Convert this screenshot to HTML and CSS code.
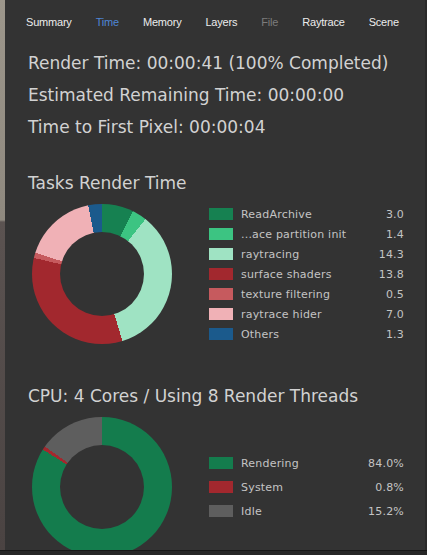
FILE: index.html
```html
<!DOCTYPE html>
<html>
<head>
<meta charset="utf-8">
<link rel="stylesheet" href="styles.css">
</head>
<body>
<div class="page">
  <div class="edge"></div>
  <div class="panel">
    <nav class="tabs">
      <span class="tab">Summary</span>
      <span class="tab active">Time</span>
      <span class="tab">Memory</span>
      <span class="tab">Layers</span>
      <span class="tab disabled">File</span>
      <span class="tab">Raytrace</span>
      <span class="tab">Scene</span>
    </nav>
    <div class="info">
      <div class="line">Render Time: 00:00:41 (100% Completed)</div>
      <div class="line">Estimated Remaining Time: 00:00:00</div>
      <div class="line">Time to First Pixel: 00:00:04</div>
    </div>
    <h2 class="title title-tasks">Tasks Render Time</h2>
    <div class="chart-row">
      <div class="donut donut-tasks"></div>
      <ul class="legend legend-tasks">
        <li><span class="sw c-read"></span><span class="lbl">ReadArchive</span><span class="val">3.0</span></li>
        <li><span class="sw c-ace"></span><span class="lbl">...ace partition init</span><span class="val">1.4</span></li>
        <li><span class="sw c-ray"></span><span class="lbl">raytracing</span><span class="val">14.3</span></li>
        <li><span class="sw c-surf"></span><span class="lbl">surface shaders</span><span class="val">13.8</span></li>
        <li><span class="sw c-tex"></span><span class="lbl">texture filtering</span><span class="val">0.5</span></li>
        <li><span class="sw c-hid"></span><span class="lbl">raytrace hider</span><span class="val">7.0</span></li>
        <li><span class="sw c-oth"></span><span class="lbl">Others</span><span class="val">1.3</span></li>
      </ul>
    </div>
    <h2 class="title title-cpu">CPU: 4 Cores / Using 8 Render Threads</h2>
    <div class="chart-row">
      <div class="donut donut-cpu"></div>
      <ul class="legend legend-cpu">
        <li><span class="sw c-rend"></span><span class="lbl">Rendering</span><span class="val">84.0%</span></li>
        <li><span class="sw c-sys"></span><span class="lbl">System</span><span class="val">0.8%</span></li>
        <li><span class="sw c-idle"></span><span class="lbl">Idle</span><span class="val">15.2%</span></li>
      </ul>
    </div>
  </div>
</div>
</body>
</html>
```
FILE: styles.css
```css
html, body {
  margin: 0;
  padding: 0;
  background: #262626;
}
body {
  width: 427px;
  height: 555px;
  overflow: hidden;
}
.page {
  display: flex;
  height: 550px;
  border-bottom: 1px solid #161616;
}
.edge {
  width: 5px;
  flex: none;
  background: linear-gradient(#9c968b 0, #8f897f 220px, #5b5351 222px, #4a4342 550px);
}
.panel {
  flex: 1;
  background: #333333;
  border-right: 2px solid #2a2a2a;
  overflow: hidden;
  font-family: "DejaVu Sans", sans-serif;
}
.tabs {
  display: flex;
  gap: 24px;
  height: 44px;
  align-items: center;
  padding-left: 21px;
  font-family: "Liberation Sans", Arial, sans-serif;
  font-size: 11px;
  letter-spacing: -0.2px;
  color: #ececec;
}
.tab.active { color: #4f86d6; }
.tab.disabled { color: #7c7c7c; }
.info {
  padding-left: 23px;
  margin-top: 3px;
  color: #d2d2d2;
  font-size: 17px;
}
.line {
  height: 32px;
  line-height: 32px;
}
.title {
  margin: 0;
  padding-left: 23px;
  font-weight: normal;
  font-size: 17px;
  color: #d2d2d2;
  line-height: 24px;
}
.title-tasks { margin-top: 28px; }
.title-cpu { margin-top: 40px; }
.chart-row {
  display: flex;
  align-items: center;
  margin-top: 9px;
  padding-left: 27px;
}
.donut {
  width: 140px;
  height: 140px;
  flex: none;
  border-radius: 50%;
  display: grid;
  place-items: center;
}
.donut::after {
  content: "";
  width: 84px;
  height: 84px;
  border-radius: 50%;
  background: #333333;
}
.donut-tasks {
  background: conic-gradient(
    #168151 0deg 26.15deg,
    #3cc482 26.15deg 38.35deg,
    #9fe3c3 38.35deg 163deg,
    #a2282e 163deg 283.3deg,
    #c65a5e 283.3deg 287.65deg,
    #f0b1b6 287.65deg 348.67deg,
    #1b5a8c 348.67deg 360deg);
}
.donut-cpu {
  background: conic-gradient(
    #147c4d 0deg 302.4deg,
    #a2282e 302.4deg 305.3deg,
    #5e5e5e 305.3deg 360deg);
}
.legend {
  list-style: none;
  margin: 0 0 0 37px;
  padding: 0;
  width: 195px;
  font-size: 11px;
  color: #c4c4c4;
}
.legend li {
  display: flex;
  align-items: center;
  height: 20px;
}
.legend-cpu li { height: 24px; }
.sw {
  width: 24px;
  height: 12px;
  flex: none;
  margin-right: 8px;
}
.lbl {
  flex: 1;
  letter-spacing: 0.2px;
}
.val {
  text-align: right;
  letter-spacing: 0.2px;
}
.c-read { background: #168151; }
.c-ace { background: #3cc482; }
.c-ray { background: #9fe3c3; }
.c-surf { background: #a2282e; }
.c-tex { background: #c65a5e; }
.c-hid { background: #f0b1b6; }
.c-oth { background: #1b5a8c; }
.c-rend { background: #147c4d; }
.c-sys { background: #a2282e; }
.c-idle { background: #5e5e5e; }
```
